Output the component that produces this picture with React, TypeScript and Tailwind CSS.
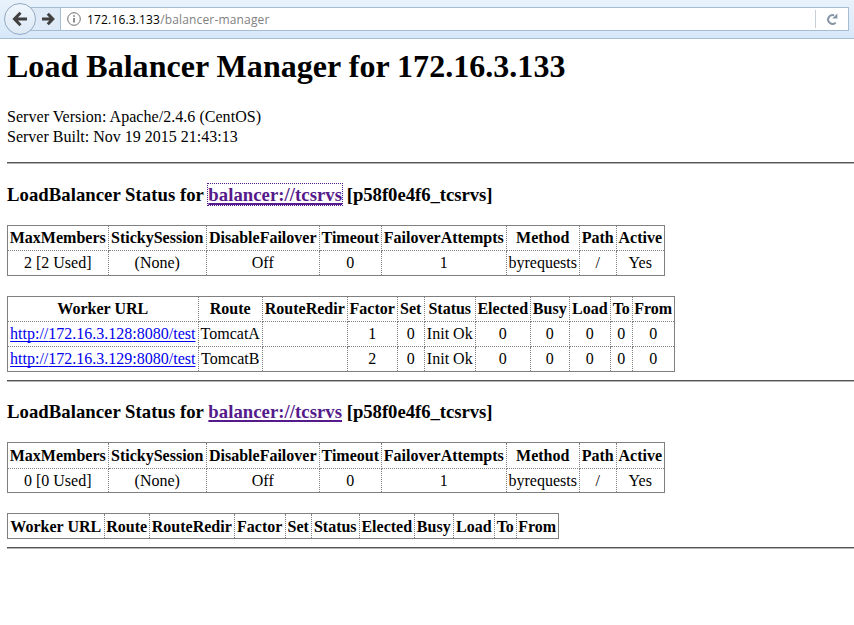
import React from 'react';

const settingsHeads = ['MaxMembers', 'StickySession', 'DisableFailover', 'Timeout', 'FailoverAttempts', 'Method', 'Path', 'Active'];
const workerHeads = ['Worker URL', 'Route', 'RouteRedir', 'Factor', 'Set', 'Status', 'Elected', 'Busy', 'Load', 'To', 'From'];
const settingsWidths = [101, 98, 113, 62, 125, 73, 37, 48];
const workerWidths = [191, 64, 85, 50, 27, 51, 55, 39, 41, 22, 42];
const emptyWorkerWidths = [97, 45, 85, 51, 26, 48, 55, 39, 41, 22, 42];

type GridProps = {
  heads: string[];
  widths: number[];
  rows: React.ReactNode[][];
  className?: string;
  headRow?: string;
  bodyRow?: string;
  cellPad?: string;
};

function DataTable({ heads, widths, rows, className = '', headRow = 'h-[25px]', bodyRow = 'h-[25px]', cellPad = 'pt-0' }: GridProps) {
  const total = widths.reduce((a, b) => a + b, 1);
  const cell = `border border-dotted border-[#808080] pr-[0.5px] pb-0 pl-0 leading-5 ${cellPad}`;
  return (
    <table style={{ width: total }} className={`table-fixed border-collapse border border-[#808080] text-center whitespace-nowrap ${className}`}>
      <colgroup>
        {widths.map((w, i) => <col key={i} style={{ width: w }} />)}
      </colgroup>
      <tbody>
        <tr className={headRow}>
          {heads.map((h) => (
            <th key={h} className={`font-bold ${cell}`}>
              <span className="-mx-2 inline-block">{h}</span>
            </th>
          ))}
        </tr>
        {rows.map((row, r) => (
          <tr key={r} className={bodyRow}>
            {row.map((value, c) => (
              <td key={c} className={cell}>
                <span className="-mx-2 inline-block">{value}</span>
              </td>
            ))}
          </tr>
        ))}
      </tbody>
    </table>
  );
}

function Rule({ className = '' }: { className?: string }) {
  return <div className={`h-[2px] border-t border-b border-t-[#555555] border-b-[#b4b4b4] ${className}`} />;
}

function StatusHeading({ focused = false, className = '' }: { focused?: boolean; className?: string }) {
  return (
    <h3 className={`text-[18.72px] font-bold leading-6 tracking-[0.04px] whitespace-nowrap ${className}`}>
      LoadBalancer Status for{' '}
      <a href="#status" className={`text-[#551a8b] underline decoration-2 underline-offset-2 [text-decoration-skip-ink:none] ${focused ? 'outline outline-1 outline-dotted outline-[#551a8b]' : ''}`}>
        balancer://tcsrvs
      </a>{' '}
      <span className="tracking-[-0.04px]">[p58f0e4f6_tcsrvs]</span>
    </h3>
  );
}

function WorkerLink({ host }: { host: string }) {
  return <a href="#worker" className="text-[#0000ee] underline underline-offset-2 [text-decoration-skip-ink:none]">http://{host}:8080/test</a>;
}

function BrowserBar() {
  return (
    <header className="flex h-[39px] items-start border-b border-[#a5bcd2] bg-linear-to-b from-[#e9f2fb] to-[#d8e8f9] pt-[3px]">
      <div className="z-10 ml-1 flex size-8 shrink-0 items-center justify-center rounded-full border border-[#94aac2] bg-linear-to-b from-[#f0f6fc] to-[#dce9f6]">
        <svg width="16" height="16" viewBox="0 0 16 16" fill="none" stroke="#404040" strokeWidth="3">
          <path d="M8.5 1.8 2.5 8l6 6.2M3 8h12" />
        </svg>
      </div>
      <div className="-ml-2 mt-1 flex h-6 w-8 shrink-0 items-center border-y border-[#a5bcd2] bg-[#deeaf7] pl-[14px]">
        <svg width="13" height="14" viewBox="0 0 13 14" fill="none" stroke="#404040" strokeWidth="3">
          <path d="m5.8 1.8 5 5.2-5 5.2M10.5 7H0" />
        </svg>
      </div>
      <div className="mr-[5px] mt-1 flex h-6 flex-1 items-center border border-[#a5bcd2] bg-white pl-[6px]">
        <svg width="14" height="14" viewBox="0 0 14 14" fill="none" stroke="#707070">
          <circle cx="7" cy="7" r="6.3" />
          <path d="M7 6v4.5M7 3.3v1.5" strokeWidth="1.6" />
        </svg>
        <span className="ml-[6px] pt-px font-['Open_Sans',sans-serif] text-[12px] leading-4 tracking-[0.16px] text-black">
          172.16.3.133<span className="text-[#808080]">/balancer-manager</span>
        </span>
        <div className="ml-auto flex h-[18px] w-[33px] items-center justify-center border-l border-[#c8ced5] pr-px">
          <svg width="12" height="12" viewBox="0 0 12 12" fill="none">
            <path d="M9.7 9.6A4.4 4.4 0 1 1 8.2 2.4" stroke="#8695a3" strokeWidth="2" />
            <path d="M11.4.4v5.2H6.2Z" fill="#8695a3" />
          </svg>
        </div>
      </div>
    </header>
  );
}

export default function App() {
  return (
    <div className="h-[625px] w-[854px] overflow-hidden bg-white font-['Liberation_Serif',serif] text-[16px] text-black">
      <BrowserBar />
      <main className="pl-[7px]">
        <h1 className="pt-[9px] text-[32px] font-bold leading-9 tracking-[0.03px] whitespace-nowrap">Load Balancer Manager for 172.16.3.133</h1>
        <div className="mt-[23px] leading-5">
          <p className="tracking-[0.04px]">Server Version: Apache/2.4.6 (CentOS)</p>
          <p>Server Built: Nov 19 2015 21:43:13</p>
        </div>
        <Rule className="mt-[15px]" />
        <StatusHeading focused className="mt-[19px]" />
        <DataTable
          className="mt-[18px]"
          heads={settingsHeads}
          widths={settingsWidths}
          rows={[['2 [2 Used]', '(None)', 'Off', '0', '1', 'byrequests', '/', 'Yes']]}
        />
        <DataTable
          className="mt-5"
          heads={workerHeads}
          widths={workerWidths}
          rows={[
            [<WorkerLink host="172.16.3.128" />, 'TomcatA', '', '1', '0', 'Init Ok', '0', '0', '0', '0', '0'],
            [<WorkerLink host="172.16.3.129" />, 'TomcatB', '', '2', '0', 'Init Ok', '0', '0', '0', '0', '0'],
          ]}
        />
        <Rule className="mt-2" />
        <StatusHeading className="mt-[18px]" />
        <DataTable
          className="mt-[18px]"
          headRow="h-[26px]"
          bodyRow="h-[24px]"
          cellPad="pt-px"
          heads={settingsHeads}
          widths={settingsWidths}
          rows={[['0 [0 Used]', '(None)', 'Off', '0', '1', 'byrequests', '/', 'Yes']]}
        />
        <DataTable className="mt-5" cellPad="pt-0.5" heads={workerHeads} widths={emptyWorkerWidths} rows={[]} />
        <Rule className="mt-2" />
      </main>
    </div>
  );
}
